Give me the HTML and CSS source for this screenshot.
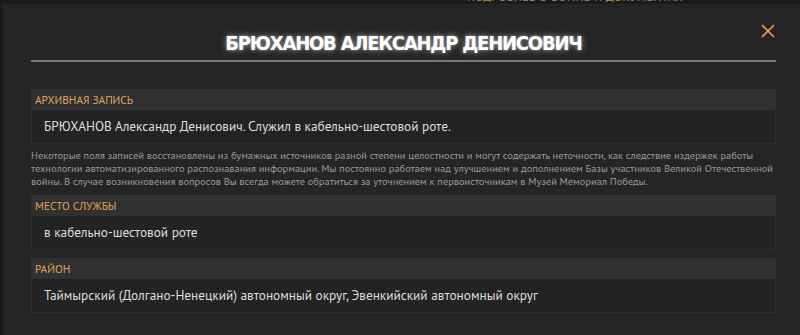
FILE: index.html
```html
<!DOCTYPE html>
<html lang="ru">
<head>
    <meta charset="UTF-8">
    <meta name="viewport" content="width=device-width, initial-scale=1">
    <title>Брюханов Александр Денисович</title>
    <link rel="stylesheet" href="styles.css">
</head>
<body>
<div class="peek">
    <span>ПОДРОБНЕЕ О ВОИНЕ И ДОКУМЕНТАХ</span>
</div>
<div class="modal">
    <button class="close" aria-label="Закрыть">
        <svg width="14" height="14" viewBox="0 0 14 14">
            <path d="M1 1 L13 13 M13 1 L1 13" stroke="#e0a657" stroke-width="1.6" fill="none"/>
        </svg>
    </button>
    <div class="title">
        <h1>БРЮХАНОВ АЛЕКСАНДР ДЕНИСОВИЧ</h1>
    </div>

    <div class="section">
        <div class="section-head">АРХИВНАЯ ЗАПИСЬ</div>
        <div class="section-body">БРЮХАНОВ Александр Денисович. Служил в кабельно-шестовой роте.</div>
    </div>
    <p class="note">Некоторые поля записей восстановлены из бумажных источников разной степени целостности и могут содержать неточности, как следствие издержек работы технологии автоматизированного распознавания информации. Мы постоянно работаем над улучшением и дополнением Базы участников Великой Отечественной войны. В случае возникновения вопросов Вы всегда можете обратиться за уточнением к первоисточникам в Музей Мемориал Победы.</p>

    <div class="section">
        <div class="section-head">МЕСТО СЛУЖБЫ</div>
        <div class="section-body">в кабельно-шестовой роте</div>
    </div>

    <div class="section">
        <div class="section-head">РАЙОН</div>
        <div class="section-body">Таймырский (Долгано-Ненецкий) автономный округ, Эвенкийский автономный округ</div>
    </div>
</div>
</body>
</html>
```

FILE: styles.css
```css
body {
    margin: 0;
    background: #1b1b1b;
    font-family: "PT Sans", "Noto Sans", "Open Sans", sans-serif;
    height: 335px;
    overflow: hidden;
}

/* strip of the page behind the modal */
.peek {
    height: 4px;
    overflow: hidden;
    padding-left: 467px;
}

.peek > span {
    display: block;
    margin-top: -9px;
    font-size: 12px;
    line-height: 12px;
    color: #b08850;
    letter-spacing: 0.3px;
}

.modal {
    position: relative;
    margin-left: 3px;
    height: 331px;
    background: #252525;
    padding: 0 24px 0 28px;
    box-sizing: border-box;
}

.close {
    position: absolute;
    top: 20px;
    right: 25px;
    background: none;
    border: 0;
    padding: 0;
    cursor: pointer;
}

.title {
    height: 56px;
    border-bottom: 2px solid #7a7a7a;
    display: flex;
    align-items: flex-end;
    justify-content: center;
}

.title > h1 {
    margin: 0 0 6px;
    font-family: "Liberation Sans Narrow", "DejaVu Sans Condensed", sans-serif;
    font-weight: bold;
    font-size: 20px;
    line-height: 22px;
    letter-spacing: -1.2px;
    color: #fff;
    text-shadow: 0 0 6px rgba(255, 255, 255, 0.55), 0 0 2px rgba(255, 255, 255, 0.4);
}

.section {
    margin-top: 8px;
}

.title + .section {
    margin-top: 27px;
}

.section-head {
    height: 21px;
    line-height: 21px;
    padding-left: 4px;
    background: #313131;
    color: #dba45c;
    font-size: 11.3px;
}

.section-body {
    height: 33px;
    line-height: 33px;
    padding-left: 12px;
    background: #232323;
    border: 1px solid #2d2d2d;
    border-top: 0;
    color: #dedede;
    font-size: 13.3px;
}

.note {
    margin: 5px 0 0;
    font-size: 10.4px;
    line-height: 13px;
    color: #9a9a9a;
}

.note + .section {
    margin-top: 7px;
}
```
